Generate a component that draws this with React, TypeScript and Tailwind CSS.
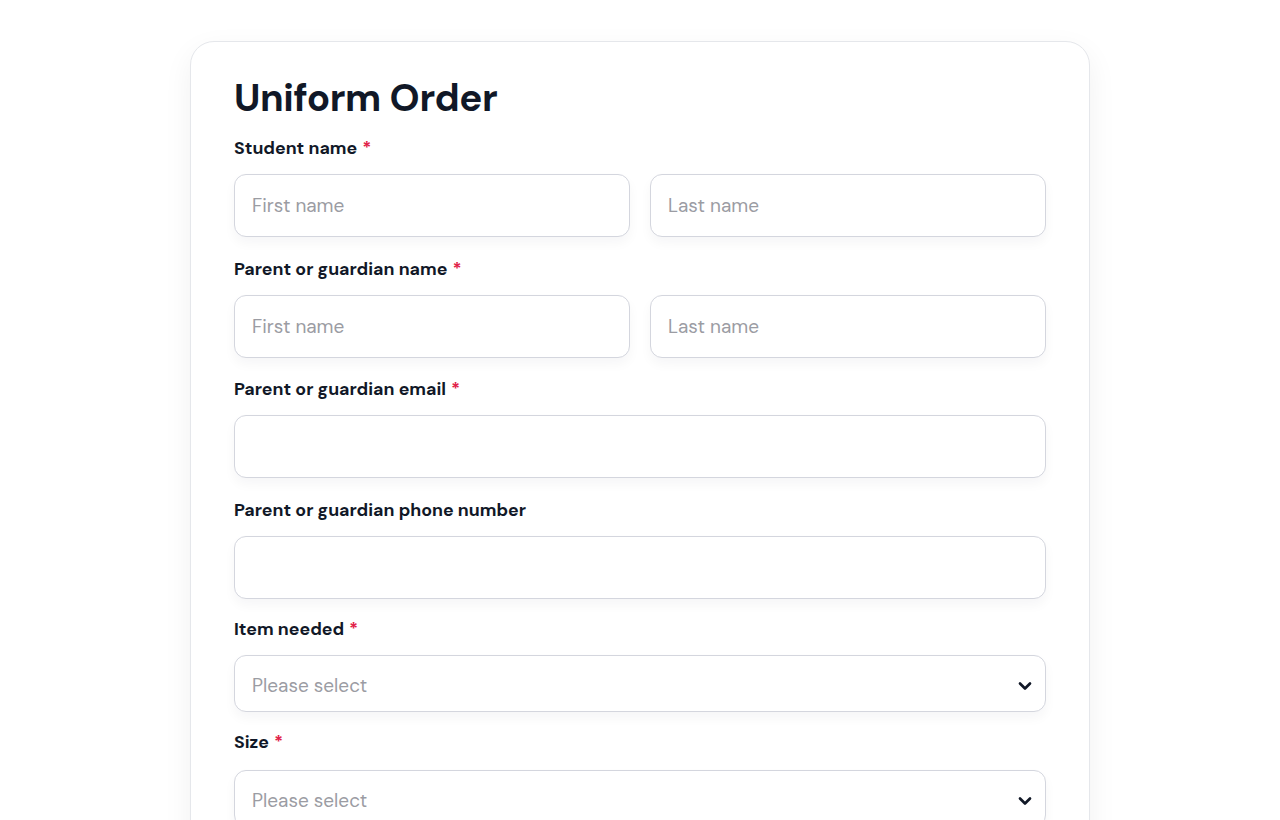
import { ChevronDown } from "lucide-react";

const font = { fontFamily: '"DM Sans", Inter, "Noto Sans", sans-serif' };

function Label({ text, required, gap = "mb-[14px]" }: { text: string; required?: boolean; gap?: string }) {
  return (
    <label className={`block text-[17.75px] leading-6 font-bold text-[#111827] ${gap}`}>
      {text}
      {required && <span className="ml-[5px] text-[#e11d48]">*</span>}
    </label>
  );
}

function Input({ placeholder }: { placeholder?: string }) {
  return (
    <input
      placeholder={placeholder}
      className="block w-full h-[63px] rounded-xl border border-[#d4d6de] bg-white px-[17px] text-[19px] text-[#111827] placeholder:text-[#9b9ca3] outline-none shadow-[0_6px_12px_rgba(17,24,39,0.04)]"
    />
  );
}

function Select() {
  return (
    <div className="relative">
      <select
        defaultValue=""
        className="block w-full h-[57px] appearance-none rounded-xl border border-[#d4d6de] bg-white pl-[17px] pr-12 pt-[6px] text-[19px] text-[#9b9ca3] outline-none shadow-[0_6px_12px_rgba(17,24,39,0.04)]"
      >
        <option value="" disabled>
          Please select
        </option>
      </select>
      <ChevronDown
        className="pointer-events-none absolute right-[11px] top-1/2 -translate-y-1/2 mt-[2px] text-[#111827]"
        size={20}
        strokeWidth={3.2}
      />
    </div>
  );
}

export default function App() {
  return (
    <div className="min-h-screen bg-white pt-[41px]" style={font}>
      <div className="mx-auto w-[900px] rounded-3xl border border-[#e5e7eb] bg-white px-[43px] pt-[32px] pb-10 shadow-[0_10px_30px_rgba(17,24,39,0.06)]">
        <h1 className="text-[38.5px] leading-[48px] font-bold text-[#111827] tracking-[-0.01em] mb-[14px]">
          Uniform Order
        </h1>

        <div className="mb-[20px]">
          <Label text="Student name" required />
          <div className="grid grid-cols-2 gap-5">
            <Input placeholder="First name" />
            <Input placeholder="Last name" />
          </div>
        </div>

        <div className="mb-[19px]">
          <Label text="Parent or guardian name" required />
          <div className="grid grid-cols-2 gap-5">
            <Input placeholder="First name" />
            <Input placeholder="Last name" />
          </div>
        </div>

        <div className="mb-[20px]">
          <Label text="Parent or guardian email" required />
          <Input />
        </div>

        <div className="mb-[18px]">
          <Label text="Parent or guardian phone number" />
          <Input />
        </div>

        <div className="mb-[18px]">
          <Label text="Item needed" required />
          <Select />
        </div>

        <div className="mb-[19px]">
          <Label text="Size" required gap="mb-[16px]" />
          <Select />
        </div>
      </div>
    </div>
  );
}
